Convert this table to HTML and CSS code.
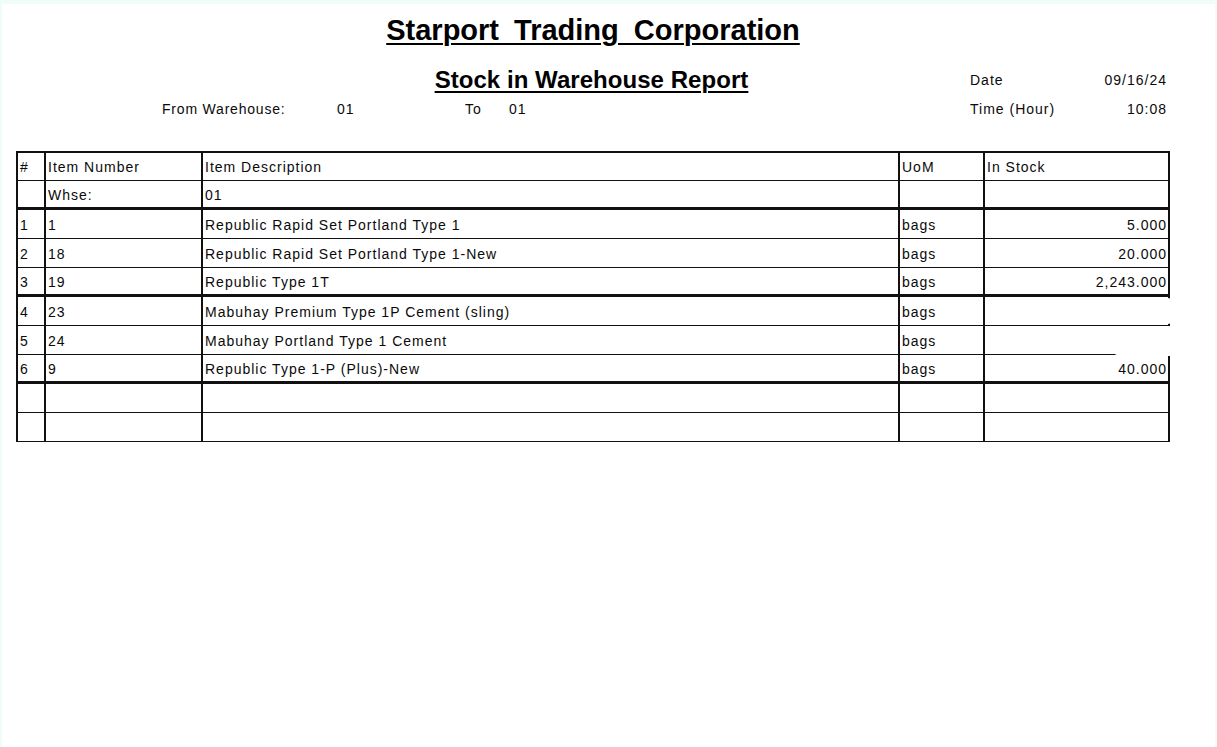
FILE: index.html
```html
<!DOCTYPE html>
<html lang="en">
<head>
<meta charset="utf-8">
<title>Stock in Warehouse Report</title>
<link rel="stylesheet" href="styles.css">
</head>
<body>
<div class="page">
  <div class="sheet">
    <h1 class="company">Starport Trading Corporation</h1>
    <div class="report-head">
      <h2 class="report-title">Stock in Warehouse Report</h2>
      <span class="meta-label date-label">Date</span>
      <span class="meta-val date-val">09/16/24</span>
      <div class="from-line">
        <span class="from-label">From Warehouse:</span>
        <span class="from-val">01</span>
        <span class="to-label">To</span>
        <span class="to-val">01</span>
      </div>
      <span class="meta-label time-label">Time (Hour)</span>
      <span class="meta-val time-val">10:08</span>
    </div>
    <div class="table-wrap">
      <table class="stock">
        <colgroup>
          <col class="c-num">
          <col class="c-item">
          <col class="c-desc">
          <col class="c-uom">
          <col class="c-qty">
        </colgroup>
        <thead>
          <tr class="head-row">
            <th>#</th><th>Item Number</th><th>Item Description</th><th>UoM</th><th>In Stock</th>
          </tr>
        </thead>
        <tbody>
          <tr class="group">
            <td></td><td>Whse:</td><td>01</td><td></td><td></td>
          </tr>
          <tr>
            <td>1</td><td>1</td><td>Republic Rapid Set Portland Type 1</td><td>bags</td><td class="qty">5.000</td>
          </tr>
          <tr>
            <td>2</td><td>18</td><td>Republic Rapid Set Portland Type 1-New</td><td>bags</td><td class="qty">20.000</td>
          </tr>
          <tr class="group">
            <td>3</td><td>19</td><td>Republic Type 1T</td><td>bags</td><td class="qty">2,243.000</td>
          </tr>
          <tr>
            <td>4</td><td>23</td><td>Mabuhay Premium Type 1P Cement (sling)</td><td>bags</td><td class="qty"></td>
          </tr>
          <tr>
            <td>5</td><td>24</td><td>Mabuhay Portland Type 1 Cement</td><td>bags</td><td class="qty"></td>
          </tr>
          <tr class="group">
            <td>6</td><td>9</td><td>Republic Type 1-P (Plus)-New</td><td>bags</td><td class="qty">40.000</td>
          </tr>
          <tr>
            <td></td><td></td><td></td><td></td><td></td>
          </tr>
          <tr>
            <td></td><td></td><td></td><td></td><td></td>
          </tr>
        </tbody>
      </table>
      <div class="blot blot-a"></div>
      <div class="blot blot-b"></div>
    </div>
  </div>
</div>
</body>
</html>
```
FILE: styles.css
```css
html, body {
  margin: 0;
  padding: 0;
}

body {
  background: #effdf8;
  font-family: "Liberation Sans", Arial, sans-serif;
  color: #0a0a0a;
}

.page {
  background: #ffffff;
  margin: 4px 2px 0 2px;
  min-height: 743px;
  padding: 9px 0 0 14px;
  box-sizing: border-box;
}

.sheet {
  width: 1154px;
}

.company {
  margin: 0;
  font-size: 29px;
  line-height: 34px;
  font-weight: bold;
  text-align: center;
  text-decoration: underline;
  text-decoration-thickness: 2px;
  text-underline-offset: 3px;
  word-spacing: 7px;
  color: #000;
}

.report-head {
  display: grid;
  grid-template-columns: 954px 110px 86px 1fr;
  row-gap: 8px;
  margin-top: 20px;
  font-size: 14px;
  line-height: 16px;
  letter-spacing: 1px;
}

.report-title {
  grid-column: 1 / -1;
  grid-row: 1;
  justify-self: center;
  margin: 0 0 0 -3px;
  font-size: 24px;
  line-height: 26px;
  font-weight: bold;
  letter-spacing: 0.05px;
  text-decoration: underline;
  text-decoration-thickness: 2px;
  text-underline-offset: 3px;
  color: #000;
}

.meta-label {
  grid-column: 2;
}

.meta-val {
  grid-column: 3;
  text-align: right;
  margin-right: -1px;
}

.date-label,
.date-val {
  grid-row: 1;
  padding-top: 5px;
}

.time-label,
.time-val {
  grid-row: 2;
}

.from-line {
  grid-column: 1;
  grid-row: 2;
  display: flex;
  padding-left: 146px;
}

.from-label {
  width: 175px;
  letter-spacing: 0.8px;
}

.from-val {
  width: 128px;
}

.to-label {
  width: 44px;
}

.table-wrap {
  position: relative;
  margin-top: 34px;
}

.stock {
  border-collapse: separate;
  border-spacing: 0;
  table-layout: fixed;
  width: 1154px;
  border-left: 2px solid #111;
  border-top: 2px solid #111;
  font-size: 14px;
  line-height: 16px;
  letter-spacing: 1px;
}

.c-num { width: 28px; }
.c-item { width: 157px; }
.c-desc { width: 697px; }
.c-uom { width: 85px; }
.c-qty { width: 185px; }

.stock th,
.stock td {
  box-sizing: border-box;
  height: 29px;
  padding: 0 2px 5px 2px;
  border-right: 2px solid #111;
  border-bottom: 1px solid #111;
  vertical-align: bottom;
  text-align: left;
  font-weight: normal;
  white-space: nowrap;
  overflow: hidden;
}

.stock .head-row th {
  height: 28px;
}

.stock tr.group td {
  border-bottom-width: 3px;
  padding-bottom: 4px;
}

.stock td.qty {
  text-align: right;
  padding-right: 1px;
}

.blot {
  position: absolute;
  background: #ffffff;
}

.blot-a {
  left: 1150px;
  top: 147px;
  width: 8px;
  height: 26px;
  border-radius: 0 6px 6px 0;
}

.blot-b {
  left: 1092px;
  top: 175px;
  width: 80px;
  height: 30px;
  border-radius: 0 6px 6px 14px;
}
```
